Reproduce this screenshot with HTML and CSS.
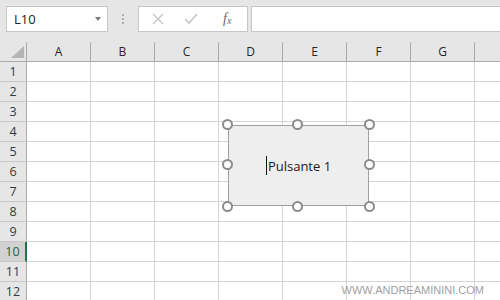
FILE: index.html
```html
<!DOCTYPE html>
<html lang="it">

<head>
    <meta charset="UTF-8">
    <title>Pulsante</title>
    <link rel="stylesheet" href="styles.css">
</head>

<body>
    <div class="formula-bar">
        <div class="name-box">
            <span>L10</span>
            <span class="name-arrow"></span>
        </div>
        <div class="grip">
            <span></span><span></span><span></span>
        </div>
        <div class="fx-buttons">
            <svg width="14" height="14" viewBox="0 0 14 14"><path d="M2 2 L12 12 M12 2 L2 12" stroke="#c4c4c4" stroke-width="1.4" fill="none"/></svg>
            <svg width="16" height="14" viewBox="0 0 16 14"><path d="M2 7 L6 11 L14 2" stroke="#c4c4c4" stroke-width="1.6" fill="none"/></svg>
            <span class="fx">f<sub>x</sub></span>
        </div>
        <div class="formula-input"></div>
    </div>

    <div class="sheet">
        <div class="corner"><span class="corner-tri"></span></div>
        <div class="col-head">A</div>
        <div class="col-head">B</div>
        <div class="col-head">C</div>
        <div class="col-head">D</div>
        <div class="col-head">E</div>
        <div class="col-head">F</div>
        <div class="col-head">G</div>
        <div class="col-head"></div>
    </div>

    <div class="button-shape">
        <span class="caret"></span>Pulsante 1
        <span class="handle h-tl"></span>
        <span class="handle h-tm"></span>
        <span class="handle h-tr"></span>
        <span class="handle h-ml"></span>
        <span class="handle h-mr"></span>
        <span class="handle h-bl"></span>
        <span class="handle h-bm"></span>
        <span class="handle h-br"></span>
    </div>

    <div class="watermark">WWW.ANDREAMININI.COM</div>

    <script>
        // fill the sheet with 12 rows of 8 empty cells
        const sheet = document.querySelector('.sheet');
        for (let r = 1; r <= 12; r++) {
            const head = document.createElement('div');
            head.classList.add('row-head');
            if (r === 10) {
                head.classList.add('selected');
            }
            head.innerText = r;
            sheet.appendChild(head);
            for (let c = 0; c < 8; c++) {
                const cell = document.createElement('div');
                cell.classList.add('cell');
                sheet.appendChild(cell);
            }
        }
    </script>
</body>

</html>
```

FILE: styles.css
```css
body {
    margin: 0;
    padding: 0;
    width: 500px;
    height: 300px;
    overflow: hidden;
    position: relative;
    background-color: #ffffff;
    font-family: 'Open Sans', 'Noto Sans', sans-serif;
    color: #222222;
}

.formula-bar {
    display: flex;
    align-items: center;
    height: 42px;
    padding: 0 0 4px 6px;
    box-sizing: border-box;
    background-color: #e6e6e6;
}

.name-box {
    box-sizing: border-box;
    display: flex;
    align-items: center;
    justify-content: space-between;
    width: 102px;
    height: 26px;
    padding: 0 6px 0 7px;
    background-color: #ffffff;
    border: 1px solid #c6c6c6;
    font-size: 13px;
}

.name-arrow {
    width: 0;
    height: 0;
    border-left: 3.5px solid transparent;
    border-right: 3.5px solid transparent;
    border-top: 4px solid #7a7a7a;
}

.grip {
    display: flex;
    flex-direction: column;
    gap: 2px;
    width: 2px;
    margin: 0 14px 0 14px;
}

.grip span {
    width: 2px;
    height: 2px;
    background-color: #b0b0b0;
}

.fx-buttons {
    box-sizing: border-box;
    display: flex;
    align-items: center;
    width: 110px;
    height: 26px;
    padding: 0 0 0 12px;
    gap: 18px;
    background-color: #ffffff;
    border: 1px solid #c6c6c6;
}

.fx {
    font-family: 'Liberation Serif', serif;
    font-style: italic;
    font-size: 14px;
    color: #6a6a6a;
    margin-left: 6px;
}

.fx sub {
    font-size: 10px;
    vertical-align: -1px;
}

.formula-input {
    box-sizing: border-box;
    flex: 1;
    height: 26px;
    margin-left: 3px;
    background-color: #ffffff;
    border: 1px solid #c6c6c6;
    border-right: none;
}

.sheet {
    display: grid;
    grid-template-columns: 27px repeat(8, 64px);
    grid-auto-rows: 20px;
}

.sheet div {
    box-sizing: border-box;
}

.corner {
    position: relative;
    background-color: #e6e6e6;
    border-right: 1px solid #ababab;
    border-bottom: 1px solid #ababab;
}

.corner-tri {
    position: absolute;
    right: 2px;
    bottom: 3px;
    width: 0;
    height: 0;
    border-left: 13px solid transparent;
    border-bottom: 12px solid #b4b4b4;
}

.col-head {
    display: flex;
    align-items: center;
    justify-content: center;
    background-color: #e6e6e6;
    border-right: 1px solid #ababab;
    border-bottom: 1px solid #ababab;
    font-size: 12px;
    color: #262626;
}

.row-head {
    display: flex;
    align-items: center;
    justify-content: center;
    background-color: #e6e6e6;
    border-right: 1px solid #ababab;
    border-bottom: 1px solid #c8c8c8;
    font-size: 12.5px;
    color: #2e3a4a;
}

.row-head.selected {
    background-color: #d2d2d2;
    border-right: 2px solid #217346;
    color: #1f5f3a;
}

.cell {
    border-right: 1px solid #d4d4d4;
    border-bottom: 1px solid #d4d4d4;
}

.button-shape {
    position: absolute;
    left: 228px;
    top: 125px;
    width: 141px;
    height: 81px;
    box-sizing: border-box;
    display: flex;
    align-items: center;
    justify-content: center;
    background-color: #eeeeee;
    border: 1.5px solid #a0a0a0;
    font-family: 'Open Sans', sans-serif;
    font-size: 13px;
    color: #1a1a1a;
}

.caret {
    width: 1px;
    height: 19px;
    margin-right: 1px;
    background-color: #111111;
}

.handle {
    position: absolute;
    width: 11px;
    height: 11px;
    box-sizing: border-box;
    border: 2px solid #8c8c8c;
    border-radius: 50%;
    background-color: #ffffff;
}

.h-tl { left: -7px; top: -7px; }
.h-tm { left: 63px; top: -7px; }
.h-tr { right: -7px; top: -7px; }
.h-ml { left: -7px; top: 33px; }
.h-mr { right: -7px; top: 33px; }
.h-bl { left: -7px; bottom: -7px; }
.h-bm { left: 63px; bottom: -7px; }
.h-br { right: -7px; bottom: -7px; }

.watermark {
    position: absolute;
    right: 16px;
    bottom: 4px;
    font-family: 'Liberation Sans', Arial, sans-serif;
    font-size: 11px;
    color: #a0a0a0;
}
```
